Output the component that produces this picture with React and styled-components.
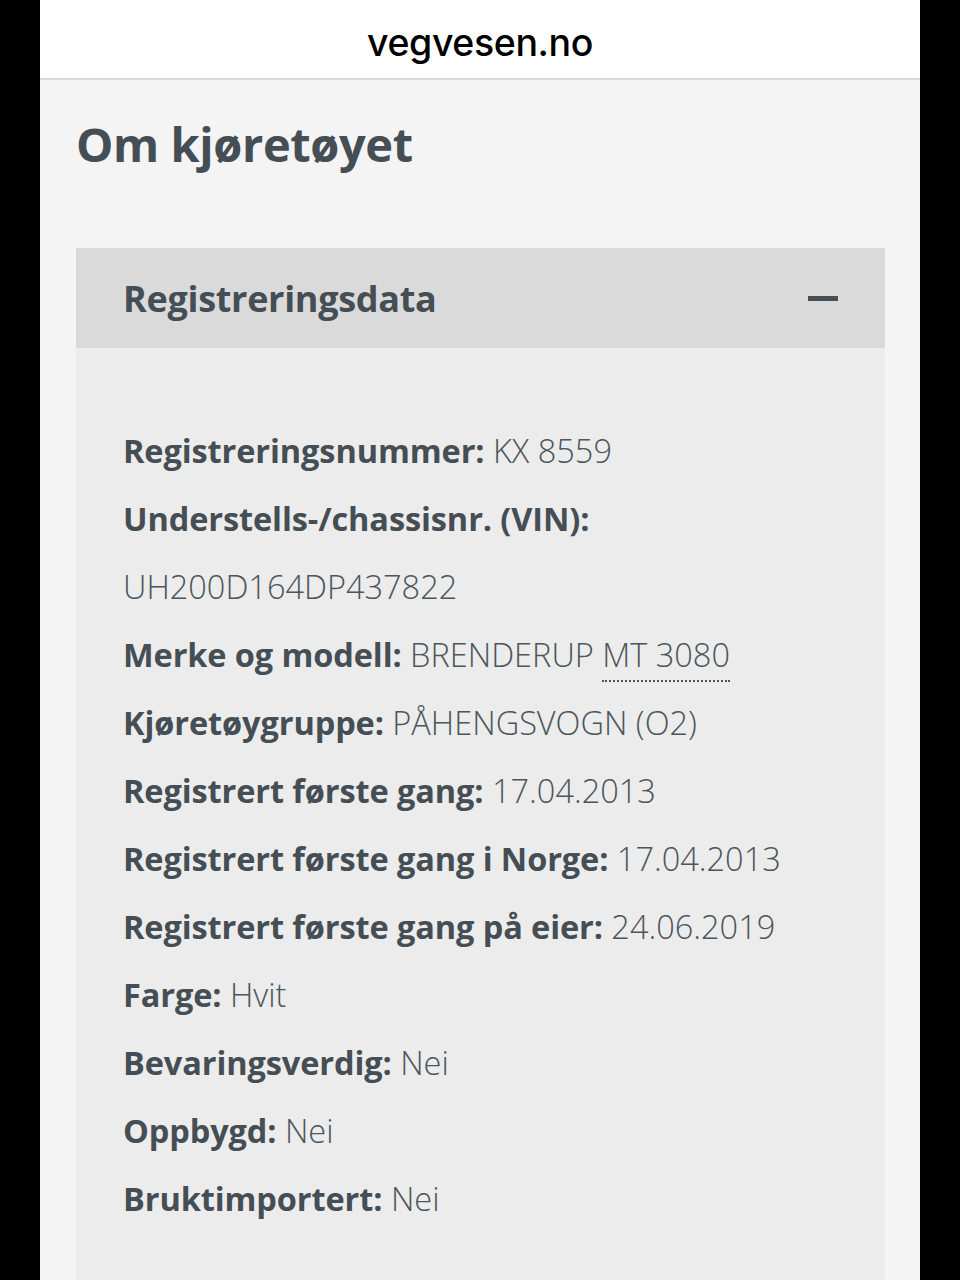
import React from "react";
import styled, { createGlobalStyle } from "styled-components";

const GlobalStyle = createGlobalStyle`
  html, body {
    margin: 0;
    padding: 0;
    background: #000;
  }
  body {
    font-family: "Open Sans", Lato, sans-serif;
  }
`;

const Frame = styled.div`
  width: 880px;
  margin: 0 auto;
  min-height: 1280px;
  background: #f4f4f4;
  overflow: hidden;
`;

const AddressBar = styled.header`
  height: 80px;
  background: #fff;
  border-bottom: 2px solid #d9d9d9;
  display: flex;
  align-items: center;
  justify-content: center;
  box-sizing: border-box;
`;

const Domain = styled.span`
  font-family: Inter, "Liberation Sans", sans-serif;
  font-size: 37.5px;
  font-weight: 500;
  color: #000;
  letter-spacing: -0.4px;
  padding-top: 6px;
`;

const Main = styled.main`
  padding: 36px 35px 0 36px;
`;

const Title = styled.h1`
  margin: 0;
  font-size: 47px;
  font-weight: 700;
  color: #444e54;
  line-height: 1.2;
  letter-spacing: -0.4px;
`;

const Panel = styled.section`
  margin-top: 76px;
`;

const PanelHeader = styled.div`
  height: 100px;
  background: #dadada;
  display: flex;
  align-items: center;
  justify-content: space-between;
  padding: 0 47px;
`;

const PanelTitle = styled.h2`
  margin: 0;
  font-size: 36px;
  font-weight: 700;
  color: #444e54;
  letter-spacing: -0.3px;
`;

const Minus = styled.span`
  display: block;
  width: 30px;
  height: 5px;
  background: #444e54;
`;

const PanelBody = styled.div`
  background: #ececec;
  padding: 69px 47px 60px;
  min-height: 900px;
`;

const Row = styled.p`
  margin: 0;
  font-size: 32.5px;
  line-height: 68px;
  color: #4b555a;
`;

const Label = styled.strong`
  font-weight: 700;
  color: #444e54;
  letter-spacing: -0.1px;
`;

const Value = styled.span`
  font-weight: 300;
`;

const Abbr = styled.span`
  border-bottom: 2px dotted #4b555a;
  padding-bottom: 3px;
`;

const rows = [
  ["Registreringsnummer:", "KX 8559"],
  ["Understells-/chassisnr. (VIN):", "UH200D164DP437822"],
  ["Merke og modell:", null],
  ["Kjøretøygruppe:", "PÅHENGSVOGN (O2)"],
  ["Registrert første gang:", "17.04.2013"],
  ["Registrert første gang i Norge:", "17.04.2013"],
  ["Registrert første gang på eier:", "24.06.2019"],
  ["Farge:", "Hvit"],
  ["Bevaringsverdig:", "Nei"],
  ["Oppbygd:", "Nei"],
  ["Bruktimportert:", "Nei"],
];

export default function App() {
  return (
    <>
      <GlobalStyle />
      <Frame>
        <AddressBar>
          <Domain>vegvesen.no</Domain>
        </AddressBar>
        <Main>
          <Title>Om kjøretøyet</Title>
          <Panel>
            <PanelHeader>
              <PanelTitle>Registreringsdata</PanelTitle>
              <Minus />
            </PanelHeader>
            <PanelBody>
              {rows.map(([label, value]) => (
                <Row key={label}>
                  <Label>{label}</Label>{" "}
                  {value !== null ? (
                    <Value>{value}</Value>
                  ) : (
                    <Value>
                      BRENDERUP <Abbr>MT 3080</Abbr>
                    </Value>
                  )}
                </Row>
              ))}
            </PanelBody>
          </Panel>
        </Main>
      </Frame>
    </>
  );
}
